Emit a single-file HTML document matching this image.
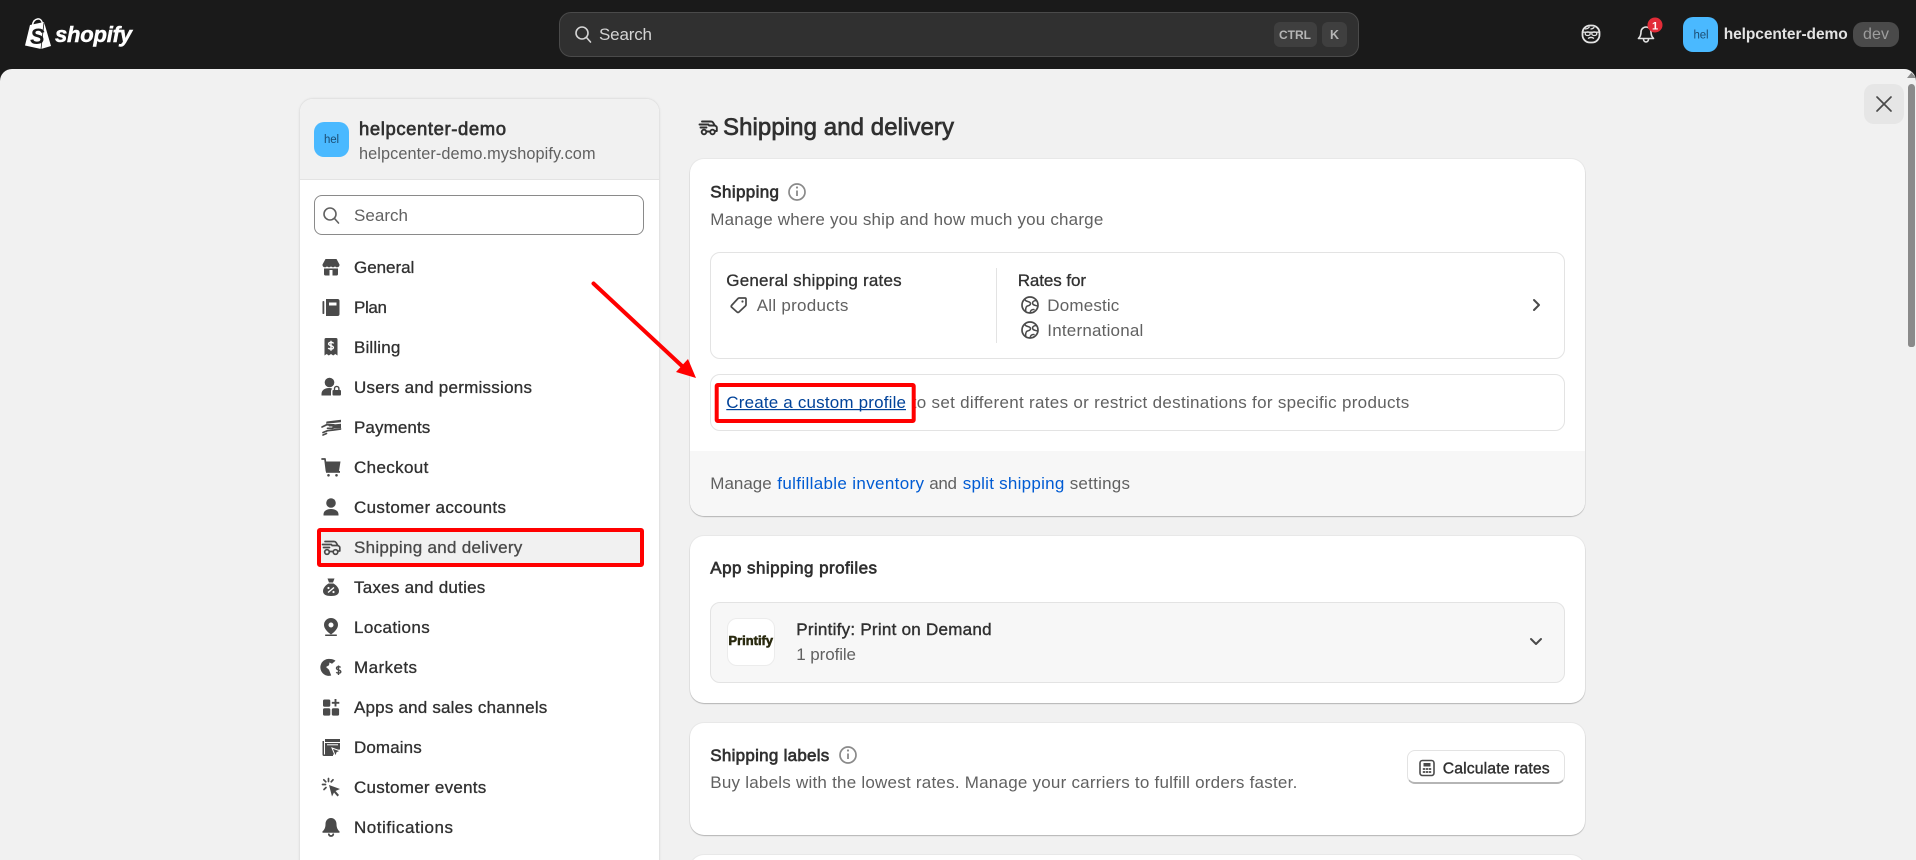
<!DOCTYPE html>
<html lang="en"><head><meta charset="utf-8"><title>Shipping and delivery</title>
<style>
html,body{margin:0;padding:0;width:1916px;height:860px;overflow:hidden;background:#1a1a1a;font-family:"Liberation Sans",sans-serif}
div{position:absolute;box-sizing:border-box}
#page{left:0;top:0;width:1916px;height:860px;overflow:hidden;background:#1a1a1a}
#panel{left:0;top:69px;width:1916px;height:791px;background:#f1f1f1;border-radius:12px 12px 0 0}
#search{left:559px;top:12px;width:800px;height:45px;background:#303030;border:1px solid #4a4a4a;border-radius:12px}
.kbd{top:22px;height:25px;background:#3f3f3f;border-radius:6px}
#av{left:1683px;top:17px;width:35px;height:35px;background:#4ab9ff;border-radius:10px}
#devp{left:1853px;top:22px;width:46px;height:25px;background:#4a4a4a;border-radius:10px}
#close{left:1864px;top:84px;width:40px;height:40px;background:#e6e6e6;border-radius:10px}
#thumb{left:1908px;top:84px;width:7px;height:263px;background:#8a8a8a;border-radius:4px 4px 3px 3px}
#side{left:299px;top:98px;width:361px;height:780px;background:#fff;border:1px solid #e3e3e3;border-radius:14px;overflow:hidden;box-shadow:0 0 2px rgba(0,0,0,.06)}
#sidehead{left:0;top:0;width:359px;height:81px;background:#f1f1f1;border-bottom:1px solid #e3e3e3}
#sav{left:314px;top:122px;width:35px;height:35px;background:#4ab9ff;border-radius:10px}
#ssearch{left:314px;top:195px;width:330px;height:40px;background:#fff;border:1px solid #8a8a8a;border-radius:8px}
#act{left:319px;top:530px;width:323px;height:35px;background:#f1f1f1}
.card{left:690px;width:895px;background:#fff;border-radius:14px;box-shadow:0 1px 1px rgba(0,0,0,.22),0 0 0 1px rgba(0,0,0,.035);overflow:hidden}
.box{left:710px;width:855px;background:#fff;border:1px solid #e3e3e3;border-radius:10px}
#foot{left:0;top:292px;width:895px;height:65px;background:#f7f7f7}
#logo{left:727px;top:618px;width:48px;height:48px;background:#fff;border:1px solid #ececec;border-radius:10px}
#btn{left:1407px;top:750px;width:158px;height:34px;background:#fff;border:1px solid #e3e3e3;border-bottom:2px solid #b5b5b5;border-radius:8px}
svg#o{position:absolute;left:0;top:0}
text{font-family:"Liberation Sans",sans-serif;font-size:17px;fill:#303030}
.n{stroke:#303030;stroke-width:.3}
.g{fill:#616161}
.m{stroke:#303030;stroke-width:.4}
.s{stroke:#303030;stroke-width:.65}
.f{fill:#4a4a4a}
.l{fill:none;stroke:#4a4a4a;stroke-width:1.7;stroke-linecap:round;stroke-linejoin:round}
</style></head><body>
<div id="page">
<div id="panel"></div>
<div id="search"></div><div class="kbd" style="left:1274px;width:43px"></div><div class="kbd" style="left:1322px;width:25px"></div>
<div id="av"></div><div id="devp"></div><div id="close"></div><div id="thumb"></div>
<div id="side"><div id="sidehead"></div></div><div id="sav"></div><div id="ssearch"></div><div id="act"></div>
<div class="card" style="top:159px;height:357px"><div id="foot"></div></div>
<div class="box" style="top:252px;height:107px"></div>
<div class="box" style="top:374px;height:57px"></div>
<div class="card" style="top:536px;height:167px"></div>
<div class="box" style="top:602px;height:81px;background:#f7f7f7"></div>
<div id="logo"></div>
<div class="card" style="top:723px;height:112px"></div>
<div id="btn"></div>
<div class="card" style="top:855px;height:40px"></div>

<svg id="o" width="1916" height="860" viewBox="0 0 1916 860" xmlns="http://www.w3.org/2000/svg">
<!-- top bar -->
<path d="M25 45.500 30 25 44 22 51 46 41 49Z" fill="#fff"/>
<path d="M32.500 25c.5-3 2-5.500 5-6 3-.5 4.500 2 5 4.500" fill="none" stroke="#fff" stroke-width="1.500"/>
<path d="M44 22.500 41 49" stroke="#1a1a1a" stroke-width=".8"/>
<text x="30" y="44" style="font-size:22px;font-weight:700;font-style:italic;fill:#1a1a1a" textLength="13">S</text>
<text x="55" y="42" style="font-size:22px;font-weight:700;font-style:italic;fill:#fff;stroke:#fff;stroke-width:.5" textLength="77">shopify</text>
<g transform="translate(574,25)" fill="none" stroke="#d4d4d4" stroke-width="1.600" stroke-linecap="round"><circle cx="8" cy="8" r="6"/><path d="m12.500 12.500 4 4.500"/></g>
<text x="599" y="40" style="fill:#d4d4d4" textLength="53">Search</text>
<text x="1279" y="39" style="font-size:12px;font-weight:700;fill:#b5b5b5" textLength="32">CTRL</text>
<text x="1330" y="39" style="font-size:12.500px;font-weight:700;fill:#b5b5b5" textLength="9">K</text>
<g transform="translate(1581,24)" fill="none" stroke="#e3e3e3"><rect x="1.500" y="1.500" width="17" height="17" rx="7.500" stroke-width="1.800"/><path d="M4 5c2.500 0 3.500-.8 4.500-2.300M9.500 5c2 0 3-.8 3.800-1.800" stroke-width="1.300"/><path d="M2.500 8.200h15" stroke-width="1.300"/><ellipse cx="6.700" cy="9.700" rx="2.500" ry="1.800" stroke-width="1.300"/><ellipse cx="13.300" cy="9.700" rx="2.500" ry="1.800" stroke-width="1.300"/><path d="M7 14.500c2-1.500 4-1.500 6 0" stroke-width="1.400"/></g>
<g transform="translate(1636,24)" fill="none" stroke="#e3e3e3" stroke-width="1.600" stroke-linejoin="round"><path d="M10 3c-3 0-5 2.500-5 5 0 3.500-1 5-2.500 6.500h15C16 13 15 11.500 15 8c0-2.500-2-5-5-5z"/><path d="M7.500 15c0 4 5 4 5 0"/></g>
<circle cx="1655" cy="25" r="7.500" fill="#e22c38"/>
<text x="1652" y="29.500" style="font-size:11px;font-weight:700;fill:#fff" textLength="6">1</text>
<text x="1693.500" y="38.500" style="font-size:11.500px;fill:#1c4d73" textLength="15">hel</text>
<text x="1723.700" y="39" style="font-size:15.500px;font-weight:700;fill:#e3e3e3" textLength="124">helpcenter-demo</text>
<text x="1863" y="39" style="font-size:16px;fill:#9d9d9d" textLength="26">dev</text>
<path d="M1877 97l14 14M1891 97l-14 14" stroke="#4a4a4a" stroke-width="1.700" stroke-linecap="round"/>
<path d="M1907 78l4.500-5.500 4.500 5.500z" fill="#8a8a8a"/>

<!-- sidebar -->
<text x="324" y="143" style="font-size:11.500px;fill:#1c4d73" textLength="15">hel</text>
<text x="359" y="135" class="s" style="font-size:18.500px" textLength="147">helpcenter-demo</text>
<text x="359" y="159" class="g" style="font-size:16.300px" textLength="236.500">helpcenter-demo.myshopify.com</text>
<g transform="translate(322,206)" fill="none" stroke="#616161" stroke-width="1.600" stroke-linecap="round"><circle cx="8" cy="8" r="6"/><path d="m12.500 12.500 4 4.500"/></g>
<text x="354" y="221" class="g" textLength="54">Search</text>

<text x="354" y="273" class="n" textLength="60.300">General</text>
<text x="354" y="313" class="n" textLength="33">Plan</text>
<text x="354" y="353" class="n" textLength="46.300">Billing</text>
<text x="354" y="393" class="n" textLength="178">Users and permissions</text>
<text x="354" y="433" class="n" textLength="76.300">Payments</text>
<text x="354" y="473" class="n" textLength="74.300">Checkout</text>
<text x="354" y="513" class="n" textLength="152">Customer accounts</text>
<text x="354" y="553" class="n" style="fill:#4a4a4a;stroke:#4a4a4a" textLength="168.300">Shipping and delivery</text>
<text x="354" y="593" class="n" textLength="131.300">Taxes and duties</text>
<text x="354" y="633" class="n" textLength="75.700">Locations</text>
<text x="354" y="673" class="n" textLength="63">Markets</text>
<text x="354" y="713" class="n" textLength="193.300">Apps and sales channels</text>
<text x="354" y="753" class="n" textLength="67.700">Domains</text>
<text x="354" y="793" class="n" textLength="132.300">Customer events</text>
<text x="354" y="833" class="n" textLength="99">Notifications</text>

<!-- nav icons -->
<g transform="translate(321,257)"><path class="f" d="M4.500 2h11l3 5.500c.2 1.700-1 2.800-2.500 2.800-1 0-1.700-.5-2-1.100-.5.7-1.200 1.100-2 1.100s-1.500-.4-2-1.100c-.5.7-1.200 1.100-2 1.100s-1.500-.4-2-1.100c-.3.6-1 1.100-2 1.100C2.500 10.300 1.300 9.200 1.500 7.500z"/><path class="f" fill-rule="evenodd" d="M3 11.500h14v5.500a1.500 1.500 0 0 1-1.500 1.500h-11A1.500 1.500 0 0 1 3 17zM8.500 13v5.500h3V13z"/></g>
<g transform="translate(321,297)"><path class="f" fill-rule="evenodd" d="M5 2h11.500A2 2 0 0 1 18.500 4v13a2 2 0 0 1-2 2H5zM8 5.500v3h7.500v-3z"/><rect class="f" x="1.500" y="4" width="1.800" height="13" rx=".8"/></g>
<g transform="translate(321,337)"><path class="f" d="M3.500 2.500A1.500 1.500 0 0 1 5 1h10A1.500 1.500 0 0 1 16.500 2.500V18.500l-2.200-1.500-2.100 1.500-2.200-1.500-2.200 1.500-2.100-1.500-2.200 1.500z"/><path d="M12.500 6.500C12 5 8 4.700 7.600 6.800c-.4 2.200 5 1.500 4.800 3.800-.2 2-4.400 1.900-5 .3M10 3.800v10" fill="none" stroke="#fff" stroke-width="1.400"/></g>
<g transform="translate(321,377)"><circle class="f" cx="8.500" cy="5.500" r="4.800"/><path class="f" d="M.5 18.500v-1.500c0-4 3.500-6 7.500-6 1.200 0 2.300.2 3.300.7-.8.6-1.300 1.500-1.300 2.500v4.300z"/><rect class="f" x="11.500" y="13" width="8.500" height="5.500" rx="1"/><path d="M13.500 13v-1.400a2.200 2.200 0 0 1 4.400 0V13" fill="none" stroke="#4a4a4a" stroke-width="1.400"/></g>
<g transform="translate(321,417)"><path class="f" d="M5.500 4.500 20 2.800v2.500L5 6.800zM7 8l13-1.200v4.200l-8.500.8 1-2.300H8z"/><path class="l" d="M1 10l4.500-2.200h7.500l-1.200 3.500H6.500M2 15.500l4.500-1.800 6-.7 7-1M5.500 16.500 2 18"/></g>
<g transform="translate(321,457)"><path class="f" d="M4.500 4.500h15l-1.500 9.500H6z"/><path class="l" d="M1 2h3l1.500 12"/><rect class="f" x="5" y="14" width="14" height="1.800"/><circle class="f" cx="7.500" cy="18.300" r="1.300"/><circle class="f" cx="15.500" cy="18.300" r="1.300"/></g>
<g transform="translate(321,497)"><circle class="f" cx="10" cy="6" r="4.800"/><path class="f" d="M2.500 18.500v-1c0-3.500 3-5.500 7.500-5.500s7.500 2 7.500 5.500v1z"/></g>
<g transform="translate(321,537)" class="l"><path d="M4 4.500h9c1 0 1.600.4 2.100 1.100l1.700 2.900 1.200.7c.5.300.8.800.8 1.300v3.500h-1.300M1.500 7.500h9M2.500 10.500h6M8.500 14.500h3.300"/><circle cx="6" cy="15" r="2.300"/><circle cx="14.500" cy="15" r="2.300"/><path d="M11 8.500h5.500"/></g>
<g transform="translate(321,577)"><path class="f" d="M6.500 1.500h7L12 5.500H8z"/><path class="f" d="M7.500 6.500h5c3 1.700 5.500 4.800 5.500 7.500 0 3.500-3 5-8 5s-8-1.500-8-5c0-2.700 2.500-5.800 5.500-7.500z"/><path d="M7 15.500l6-5" stroke="#fff" stroke-width="1.400"/><circle cx="7.500" cy="11" r="1.100" fill="#fff"/><circle cx="12.500" cy="15" r="1.100" fill="#fff"/></g>
<g transform="translate(321,617)"><path class="f" fill-rule="evenodd" d="M10 1a7 7 0 0 1 7 7c0 3.500-3.500 7-7 9.500C6.500 15 3 11.500 3 8a7 7 0 0 1 7-7zm0 4.500a2.500 2.500 0 1 0 0 5 2.500 2.500 0 0 0 0-5z"/><rect class="f" x="4" y="17.500" width="12" height="1.500" rx=".7"/></g>
<g transform="translate(321,657)"><path class="f" d="M9.500 2a8.500 8.500 0 0 1 5 1.800L11 6.800l-2.500-1.300-.5 2.800-3 1.700 3 2.800 2.200 5.700A8.500 8.500 0 1 1 9.500 2z"/><path d="M19.500 10.500c-.5-1.200-4-1.200-4 .7 0 2 4.300 1.500 4.300 3.500 0 1.800-3.600 1.800-4.500.5M17.500 8.500v9.500" fill="none" stroke="#4a4a4a" stroke-width="1.400"/></g>
<g transform="translate(321,697)"><rect class="f" x="2" y="2.500" width="7.300" height="7.300" rx="1.500"/><rect class="f" x="2" y="11.300" width="7.300" height="7.300" rx="1.500"/><rect class="f" x="10.800" y="11.300" width="7.300" height="7.300" rx="1.500"/><path d="M14.500 2v7.500M10.800 5.800h7.500" stroke="#4a4a4a" stroke-width="1.900"/></g>
<g transform="translate(321,737)"><path class="f" d="M4 2h15v3H4zM4 6h15v6.500l-6 1 1 4H4zM1.500 4H3v13.500h9v1.500H3a1.500 1.500 0 0 1-1.500-1.500z"/><path d="M6 7.800h11" stroke="#fff" stroke-width="1"/><path d="M11 11l8.500 3-3.500 1.500-1.500 4z" fill="#4a4a4a" stroke="#fff" stroke-width="1"/></g>
<g transform="translate(321,777)"><path class="f" d="M8 8l11 4-4.500 2 3.500 4-1.500 1.500-3.500-4L11 19.500z"/><path class="l" d="M7.500 1.500v3M1.500 7.500h3M2.800 2.800l2 2M12 2.800l-1.800 2M3 12.500l2-2"/></g>
<g transform="translate(321,817)"><path class="f" d="M10 1c-3.500 0-5.500 3-5.500 6 0 3.500-1 5.500-3 7.500a.8.8 0 0 0 .5 1.300h16a.8.8 0 0 0 .5-1.300c-2-2-3-4-3-7.500 0-3-2-6-5.500-6z"/><path class="l" d="M7.800 17.200c.5 2.400 4 2.400 4.500 0"/></g>

<!-- heading -->
<g transform="translate(698,117)" class="l" style="stroke:#303030;stroke-width:1.900"><path d="M4 4.500h9c1 0 1.600.4 2.100 1.100l1.700 2.900 1.200.7c.5.300.8.800.8 1.300v3.500h-1.300M1.500 7.500h9M2.500 10.500h6M8.500 14.500h3.300"/><circle cx="6" cy="15" r="2.300"/><circle cx="14.500" cy="15" r="2.300"/><path d="M11 8.500h5.500"/></g>
<text x="723" y="135" class="s" style="font-size:24px;stroke-width:.7" textLength="231">Shipping and delivery</text>

<!-- card 1 -->
<text x="710.300" y="197.500" class="s" textLength="68.700">Shipping</text>
<circle cx="797" cy="192" r="8" fill="none" stroke="#8a8a8a" stroke-width="1.700"/><path d="M797 190.500v5.500" stroke="#8a8a8a" stroke-width="1.800"/><circle cx="797" cy="187.500" r="1.100" fill="#8a8a8a"/>
<text x="710.300" y="225" class="g" textLength="393">Manage where you ship and how much you charge</text>
<text x="726.300" y="286" class="n" textLength="175.300">General shipping rates</text>
<g transform="translate(729,295)" class="l"><path d="M2.500 10.500 9 3.500a1.500 1.500 0 0 1 1.100-.5H16a1 1 0 0 1 1 1v5.800a1.500 1.500 0 0 1-.5 1.100l-6.500 6.100a1.500 1.500 0 0 1-2 0l-5-4.500a1.500 1.500 0 0 1-.5-2z"/></g><circle cx="742.500" cy="301.500" r="1.100" fill="#4a4a4a"/>
<text x="756.700" y="311" class="g" textLength="91.700">All products</text>
<rect x="996" y="268" width="1" height="75" fill="#e3e3e3"/>
<text x="1017.700" y="286" class="n" textLength="68.300">Rates for</text>
<g transform="translate(1020,295)" class="l"><circle cx="10" cy="10" r="8"/><path style="stroke-width:1.500" d="M4.800 4.500c1.300 2.500 3.800 1.500 5.200 3 1.200 1.500 0 3-1.800 3.200-2 .2-2.700 2-2.500 5M16 5.500c-2.800.2-4 1.800-3.200 3.500.7 1.400 2.600 1.200 5 2.200M10.200 17.800c0-2 1.400-3.500 3.800-3.300"/></g>
<text x="1047.300" y="311" class="g" textLength="72">Domestic</text>
<g transform="translate(1020,320)" class="l"><circle cx="10" cy="10" r="8"/><path style="stroke-width:1.500" d="M4.800 4.500c1.300 2.500 3.800 1.500 5.200 3 1.200 1.500 0 3-1.800 3.200-2 .2-2.700 2-2.500 5M16 5.500c-2.800.2-4 1.800-3.200 3.500.7 1.400 2.600 1.200 5 2.200M10.200 17.800c0-2 1.400-3.500 3.800-3.300"/></g>
<text x="1047.300" y="336" class="g" textLength="96">International</text>
<path class="l" style="stroke-width:2" d="M1534 300l5 5-5 5"/>

<text x="726.300" y="408" style="fill:#004299" textLength="179.700">Create a custom profile</text>
<rect x="726.300" y="409" width="179.700" height="1.200" fill="#004299"/>
<text x="911.700" y="408" class="g" textLength="497.600">to set different rates or restrict destinations for specific products</text>

<text x="710.300" y="489" class="g" textLength="61.400">Manage</text>
<text x="777.300" y="489" style="fill:#005bd3" textLength="146.700">fulfillable inventory</text>
<text x="929.300" y="489" class="g" textLength="27.700">and</text>
<text x="962.700" y="489" style="fill:#005bd3" textLength="101.600">split shipping</text>
<text x="1069.700" y="489" class="g" textLength="60.300">settings</text>

<!-- card 2 -->
<text x="710.300" y="573.500" class="s" textLength="166.700">App shipping profiles</text>
<text x="728.500" y="645" style="font-size:12.800px;font-weight:700;fill:#2b2b10;stroke:#2b2b10;stroke-width:.6" textLength="44.500">Printify</text>
<text x="796.300" y="635" class="m" textLength="195.300">Printify: Print on Demand</text>
<text x="796.300" y="660" class="g" textLength="59.700">1 profile</text>
<path class="l" style="stroke-width:2" d="M1531 639l5 5 5-5"/>

<!-- card 3 -->
<text x="710.300" y="761" class="s" textLength="119">Shipping labels</text>
<circle cx="848" cy="755" r="8" fill="none" stroke="#8a8a8a" stroke-width="1.700"/><path d="M848 753.500v5.500" stroke="#8a8a8a" stroke-width="1.800"/><circle cx="848" cy="750.500" r="1.100" fill="#8a8a8a"/>
<text x="710.300" y="788" class="g" textLength="587">Buy labels with the lowest rates. Manage your carriers to fulfill orders faster.</text>
<g transform="translate(1417,758)"><rect x="3" y="2.500" width="14" height="15" rx="2.500" fill="none" stroke="#4a4a4a" stroke-width="1.600"/><rect x="6.500" y="5" width="7" height="3.500" fill="#4a4a4a"/><path d="M5.800 11h2.400M8.800 11h2.400M11.800 11h2.400M5.800 14h2.400M8.800 14h2.400M11.800 14h2.400" stroke="#4a4a4a" stroke-width="1.800"/></g>
<text x="1442.700" y="773.500" class="m" style="font-size:15.800px" textLength="107">Calculate rates</text>

<!-- annotations -->
<rect x="319" y="530" width="323" height="35" rx="1" fill="none" stroke="#ff0000" stroke-width="4"/>
<rect x="716.700" y="385" width="197" height="36" rx="1" fill="none" stroke="#ff0000" stroke-width="4"/>
<path d="M593.500 283.500 682 366" stroke="#ff0000" stroke-width="4" stroke-linecap="round"/>
<path d="M696 378 676 372 688 359Z" fill="#ff0000"/>
</svg>
</div>
</body></html>
